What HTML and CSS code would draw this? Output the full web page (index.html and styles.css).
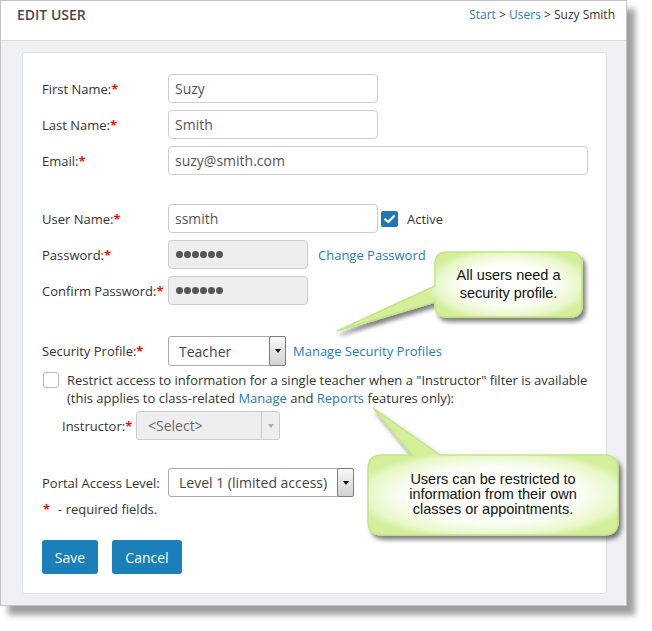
FILE: index.html
```html
<!DOCTYPE html>
<html>
<head>
<meta charset="utf-8">
<title>Edit User</title>
<link rel="stylesheet" href="styles.css">
</head>
<body>
<div class="frame">
  <div class="header">
    <div class="title">EDIT USER</div>
    <div class="crumbs"><a class="link">Start</a> &gt; <a class="link">Users</a> &gt; Suzy Smith</div>
  </div>
  <div class="content">
    <div class="panel">
      <div class="row">
        <div class="lbl">First Name:<span class="req">*</span></div>
        <div class="field w210">Suzy</div>
      </div>
      <div class="row">
        <div class="lbl">Last Name:<span class="req">*</span></div>
        <div class="field w210">Smith</div>
      </div>
      <div class="row gap-lg">
        <div class="lbl">Email:<span class="req">*</span></div>
        <div class="field w420">suzy@smith.com</div>
      </div>
      <div class="row">
        <div class="lbl">User Name:<span class="req">*</span></div>
        <div class="field w210">ssmith</div>
        <div class="check">
          <svg width="17" height="16" viewBox="0 0 17 16"><path d="M4.2 8.3 L7.3 11 L12.8 5.2" fill="none" stroke="#fff" stroke-width="2.3" stroke-linecap="round" stroke-linejoin="round"/></svg>
        </div>
        <span class="active">Active</span>
      </div>
      <div class="row">
        <div class="lbl">Password:<span class="req">*</span></div>
        <div class="field w140 disabled"><span class="dots"><i></i><i></i><i></i><i></i><i></i><i></i></span></div>
        <a class="link side">Change Password</a>
      </div>
      <div class="row gap-sec">
        <div class="lbl">Confirm Password:<span class="req">*</span></div>
        <div class="field w140 disabled"><span class="dots"><i></i><i></i><i></i><i></i><i></i><i></i></span></div>
      </div>
      <div class="row sec">
        <div class="lbl">Security Profile:<span class="req">*</span></div>
        <div class="select w118">
          <span class="val">Teacher</span>
          <span class="arrow"><span class="tri"></span></span>
        </div>
        <a class="link side2">Manage Security Profiles</a>
      </div>
      <div class="restrict">
        <span class="cb"></span>
        <p>Restrict access to information for a single teacher when a "Instructor" filter is available<br>(this applies to class-related <a class="link">Manage</a> and <a class="link">Reports</a> features only):</p>
      </div>
      <div class="row instr">
        <div class="lbl lbl-sm">Instructor:<span class="req">*</span></div>
        <div class="select w144 dis">
          <span class="val">&lt;Select&gt;</span>
          <span class="arrow"><span class="tri"></span></span>
        </div>
      </div>
      <div class="row portal">
        <div class="lbl">Portal Access Level:</div>
        <div class="select w186">
          <span class="val">Level 1 (limited access)</span>
          <span class="arrow"><span class="tri"></span></span>
        </div>
      </div>
      <div class="required"><span class="req">*</span><span class="rtxt">- required fields.</span></div>
      <div class="buttons">
        <button class="btn b-save">Save</button>
        <button class="btn b-cancel">Cancel</button>
      </div>
    </div>
  </div>
</div>

<svg class="callouts" width="652" height="631" viewBox="0 0 652 631">
  <defs>
    <radialGradient id="g1" gradientUnits="userSpaceOnUse" cx="0" cy="0" r="1.15" gradientTransform="translate(508.5 284.5) scale(73.5 32.5)">
      <stop offset="0" stop-color="#ffffff"/>
      <stop offset="0.55" stop-color="#fcfef6"/>
      <stop offset="0.85" stop-color="#e8f7c8"/>
      <stop offset="1" stop-color="#d3ef99"/>
    </radialGradient>
    <radialGradient id="g2" gradientUnits="userSpaceOnUse" cx="0" cy="0" r="1.15" gradientTransform="translate(493 495) scale(125 40)">
      <stop offset="0" stop-color="#ffffff"/>
      <stop offset="0.6" stop-color="#fcfef6"/>
      <stop offset="0.88" stop-color="#e8f7c8"/>
      <stop offset="1" stop-color="#d3ef99"/>
    </radialGradient>
    <filter id="sh" filterUnits="userSpaceOnUse" x="0" y="0" width="652" height="631">
      <feDropShadow dx="3" dy="4" stdDeviation="2.2" flood-color="#000" flood-opacity="0.5"/>
    </filter>
  </defs>
  <path d="M447 252 H570 Q582 252 582 264 V305 Q582 317 570 317 H447 Q435 317 435 305 V302 L337 331 L435 286 V264 Q435 252 447 252 Z" fill="url(#g1)" stroke="#c3e583" stroke-width="1.5" filter="url(#sh)"/>
  <path d="M382 455 H412 L373 408 L440 455 H604 Q618 455 618 469 V521 Q618 535 604 535 H382 Q368 535 368 521 V469 Q368 455 382 455 Z" fill="url(#g2)" stroke="#c3e583" stroke-width="1.5" filter="url(#sh)"/>
</svg>
<div class="note n1">All users need a<br>security profile.</div>
<div class="note n2">Users can be restricted to<br>information from their own<br>classes or appointments.</div>
</body>
</html>
```

FILE: styles.css
```css
* {
  box-sizing: border-box;
}

body {
  margin: 0;
  width: 652px;
  height: 631px;
  overflow: hidden;
  position: relative;
  background: #ffffff;
  font-family: "Open Sans", "DejaVu Sans", sans-serif;
  color: #333333;
}

.frame {
  width: 627px;
  height: 606px;
  border: 1px solid #c3c3c3;
  background: #ffffff;
  display: flex;
  flex-direction: column;
  box-shadow: 8px 9px 6px rgba(0, 0, 0, 0.38);
}

.header {
  flex: none;
  height: 40px;
  border-bottom: 1px solid #dcdde1;
  display: flex;
  justify-content: space-between;
  align-items: flex-start;
  padding: 4px 11px 0 16px;
}

.title {
  font-size: 14px;
  font-weight: 600;
  line-height: 20px;
  color: #4a4a4a;
}

.crumbs {
  font-size: 12px;
  line-height: 18px;
  padding-top: 1px;
  color: #333333;
}

.link {
  color: #2a7bb6;
  text-decoration: none;
}

.content {
  flex: 1;
  background: #eff0f4;
  padding: 11px 19px 11px 21px;
}

.panel {
  height: 100%;
  background: #ffffff;
  border: 1px solid #e0e1e6;
  border-radius: 3px;
  padding: 21px 18px 18px 19px;
}

.row {
  display: flex;
  align-items: center;
  height: 29px;
  margin-bottom: 7px;
}

.row.gap-lg {
  margin-bottom: 29px;
}

.row.gap-sec {
  margin-bottom: 31px;
}

.row.sec {
  height: 30px;
  margin-bottom: 5px;
}

.lbl {
  flex: none;
  width: 126px;
  font-size: 13px;
  line-height: 18px;
  color: #333333;
}

.lbl-sm {
  width: 74px;
}

.req {
  color: #ee1111;
  font-weight: 700;
}

.field {
  height: 29px;
  border: 1px solid #cccccc;
  border-radius: 4px;
  padding: 0 6px;
  font-size: 14px;
  color: #555555;
  display: flex;
  align-items: center;
  background: #ffffff;
}

.w210 { width: 210px; }
.w420 { width: 420px; }
.w140 { width: 140px; }
.w118 { width: 118px; }
.w144 { width: 144px; }
.w186 { width: 186px; }

.field.disabled {
  background: #eeeeee;
}

.dots {
  display: flex;
  gap: 1px;
  padding-left: 1px;
}

.dots i {
  display: block;
  width: 7px;
  height: 7px;
  border-radius: 50%;
  background: #555555;
}

.check {
  width: 17px;
  height: 16px;
  margin-left: 3px;
  border-radius: 2px;
  background: #1f78b5;
  display: flex;
}

.active {
  margin-left: 9px;
  font-size: 13px;
  color: #333333;
}

.side {
  margin-left: 10px;
  font-size: 13px;
}

.side2 {
  margin-left: 7px;
  font-size: 13px;
}

.select {
  height: 100%;
  border: 1px solid #a9a9a9;
  border-radius: 3px;
  background: #ffffff;
  display: flex;
  font-size: 14px;
  color: #444444;
}

.select .val {
  flex: 1;
  display: flex;
  align-items: center;
  padding-left: 10px;
  white-space: nowrap;
}

.select .arrow {
  flex: none;
  width: 17px;
  margin: -1px -1px -1px 0;
  border: 1px solid #7d7d7d;
  border-radius: 2px;
  background: linear-gradient(#f8f8f8, #d2d2d2);
  display: flex;
  align-items: center;
  justify-content: center;
}

.tri {
  width: 0;
  height: 0;
  border-left: 3.5px solid transparent;
  border-right: 3.5px solid transparent;
  border-top: 4px solid #111111;
}

.select.dis {
  background: #eeeeee;
  border-color: #cccccc;
  color: #666666;
}

.select.dis .val {
  padding-left: 11px;
}

.select.dis .arrow {
  width: 18px;
  margin: 0;
  border: none;
  border-left: 1px solid #cccccc;
  border-radius: 0;
  background: transparent;
}

.select.dis .tri {
  border-top-color: #aaaaaa;
}

.restrict {
  display: flex;
  align-items: flex-start;
  margin-bottom: 4px;
}

.cb {
  flex: none;
  width: 16px;
  height: 16px;
  margin: 1px 0 0 1px;
  border: 1px solid #bbbbbb;
  border-radius: 3px;
  background: #ffffff;
}

.restrict p {
  margin: 0 0 0 8px;
  font-size: 13px;
  line-height: 18px;
  white-space: nowrap;
  color: #333333;
}

.row.instr {
  padding-left: 20px;
  margin-bottom: 28px;
}

.row.portal {
  margin-bottom: 3px;
}

.required {
  font-size: 13px;
  line-height: 18px;
  color: #333333;
}

.required .req {
  margin-left: 1px;
}

.rtxt {
  margin-left: 8px;
}

.buttons {
  display: flex;
  gap: 14px;
  margin-top: 22px;
}

.btn {
  height: 34px;
  border: none;
  border-radius: 3px;
  background: #1b7fba;
  color: #ffffff;
  font-family: "Open Sans", sans-serif;
  font-size: 14px;
  padding: 0;
}

.b-save { width: 56px; }
.b-cancel { width: 70px; }

.callouts {
  position: absolute;
  left: 0;
  top: 0;
  pointer-events: none;
}

.note {
  position: absolute;
  font-family: "Liberation Sans", Arial, sans-serif;
  font-size: 14.5px;
  color: #111111;
  text-align: center;
  white-space: nowrap;
}

.n1 {
  left: 435px;
  top: 266px;
  width: 147px;
  line-height: 18px;
}

.n2 {
  left: 368px;
  top: 472px;
  width: 250px;
  line-height: 15px;
}
```
